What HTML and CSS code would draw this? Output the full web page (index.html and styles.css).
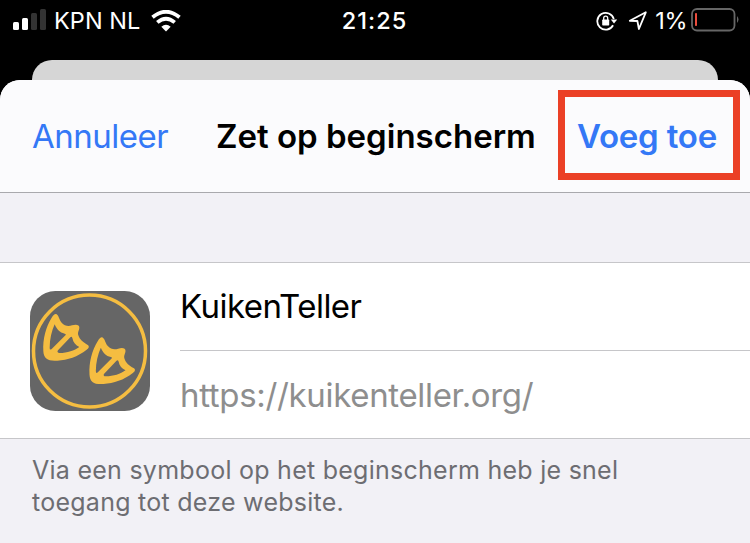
FILE: index.html
```html
<!DOCTYPE html>
<html lang="nl">
<head>
<meta charset="utf-8">
<title>Zet op beginscherm</title>
<link rel="stylesheet" href="styles.css">
</head>
<body>
<header class="status">
  <div class="status-left">
    <svg class="signal" width="33" height="22" viewBox="0 0 33 22">
      <rect x="0" y="13" width="6" height="8" rx="1.5" fill="#fff"/>
      <rect x="9" y="9" width="6" height="12" rx="1.5" fill="#fff"/>
      <rect x="18" y="4" width="6" height="17" rx="1.5" fill="#333"/>
      <rect x="27" y="0" width="6" height="21" rx="1.5" fill="#333"/>
    </svg>
    <span class="carrier">KPN NL</span>
    <svg class="wifi" width="30" height="22" viewBox="0 0 30 22">
      <g fill="none" stroke="#fff" stroke-width="3.8">
        <path d="M1.5 7.3 Q15 -3.8 28.5 7.3"/>
        <path d="M6.3 12.4 Q15 5 23.7 12.4"/>
      </g>
      <path d="M10.3 16.7 Q15 13 19.7 16.7 L15 21.5Z" fill="#fff"/>
    </svg>
  </div>
  <span class="time">21:25</span>
  <div class="status-right">
    <svg class="rotation" width="22" height="20" viewBox="0 0 22 20">
      <path d="M17.1 14.3 A8.4 8.4 0 1 1 17.8 8" fill="none" stroke="#fff" stroke-width="1.8"/>
      <path d="M14.8 8.4 H21.2 L18 12.5Z" fill="#fff"/>
      <rect x="6.2" y="8.6" width="7" height="5.8" rx=".7" fill="#fff"/>
      <path d="M7.7 9 V7.2 A2 2 0 0 1 11.7 7.2 V9" fill="none" stroke="#fff" stroke-width="1.3"/>
    </svg>
    <svg class="location" width="20" height="20" viewBox="0 0 20 20">
      <path d="M1.8 9.8 L17.8 1.3 L10.9 18 L9.4 10Z" fill="none" stroke="#fff" stroke-width="1.8" stroke-linejoin="round"/>
    </svg>
    <span class="percent">1%</span>
    <svg class="battery" width="48" height="24" viewBox="0 0 48 24">
      <rect x="1" y="1" width="42.5" height="21.5" rx="5" fill="none" stroke="#666" stroke-width="1.8"/>
      <rect x="4" y="5" width="2" height="13" rx=".8" fill="#eb4d3d"/>
      <path d="M46 8 Q49 11.5 46 15Z" fill="#666"/>
    </svg>
  </div>
</header>
<div class="back-card"></div>
<main class="sheet">
  <nav class="toolbar">
    <span class="cancel">Annuleer</span>
    <h1 class="title">Zet op beginscherm</h1>
    <div class="highlight"><span class="add">Voeg toe</span></div>
  </nav>
  <section class="bookmark">
    <svg class="app-icon" width="120" height="120" viewBox="30 33 360 360">
      <defs>
        <path id="foot" fill-rule="evenodd" d="M110 103 C117 108 117 119 125 128 C134 138 145 140 156 136 C168 132 179 134 178 143 C177 153 172 157 175 166 C179 179 190 187 202 194 C209 198 207 204 200 209 C173 230 143 240 112 242 C85 244 71 237 70 214 C68 175 78 141 95 113 C101 104 105 100 110 103Z M104 133 C95 153 89 177 89 203 Q89 212 95 207 L137 165 Q139 162 134 161 C119 158 111 149 104 133Z M151 172 L114 211 Q109 218 119 219 C142 219 163 212 178 201 C167 196 160 188 157 174 Q155 168 151 172Z"/>
      </defs>
      <rect x="30" y="33" width="360" height="360" rx="76" fill="#666"/>
      <circle cx="208.5" cy="213" r="168" fill="none" stroke="#f5bd41" stroke-width="10.5"/>
      <g fill="#f5bd41"><use href="#foot"/><use href="#foot" x="138.5" y="70"/></g>
    </svg>
    <div class="fields">
      <div class="field name"><span>KuikenTeller</span></div>
      <div class="field url"><span>https://kuikenteller.org/</span></div>
    </div>
  </section>
  <p class="note">Via een symbool op het beginscherm heb je snel<br>toegang tot deze website.</p>
</main>
</body>
</html>
```
FILE: styles.css
```css
* { box-sizing: border-box; }
body {
  margin: 0;
  width: 750px;
  height: 543px;
  overflow: hidden;
  background: #000;
  font-family: Inter, "Liberation Sans", sans-serif;
  white-space: nowrap;
}
svg { display: block; flex: none; }
.status {
  display: grid;
  grid-template-columns: 1fr auto 1fr;
  height: 60px;
  padding: 0 11px 0 13px;
  color: #fff;
  font-size: 23.5px;
  line-height: 42px;
}
.status-left, .status-right { display: flex; height: 41px; align-items: center; }
.status-right { justify-content: flex-end; }
.signal { margin: 0 8px 2px 0; }
.carrier { width: 97px; letter-spacing: .05px; }
.time { margin: 0 2px 0 -1px; font-weight: 500; letter-spacing: 1px; }
.rotation { margin-right: 10px; }
.location { margin-right: 7px; }
.percent { margin-right: 4px; letter-spacing: -.5px; }
.battery { margin-bottom: 1px; }
.back-card {
  height: 20px;
  margin: 0 32px;
  border-radius: 20px 20px 0 0;
  background: #d6d6d6;
}
.sheet {
  height: 463px;
  overflow: hidden;
  border-radius: 20px 20px 0 0;
  background: #f2f1f6;
}
.toolbar {
  display: flex;
  height: 113px;
  padding: 10px 10px 0 32px;
  border-bottom: 1px solid #a9a9ad;
  background: #fbfbfd;
  font-size: 33px;
  line-height: 40px;
}
.cancel { width: 184px; padding-top: 26px; color: #3478f6; letter-spacing: -.5px; }
.title { width: 342px; margin: 0; padding-top: 26px; font-size: 33px; font-weight: 600; letter-spacing: 0; }
.highlight {
  width: 182px;
  height: 90px;
  padding: 19px 0 0 12px;
  border: 7px solid #eb4026;
  color: #3478f6;
  font-weight: 600;
  letter-spacing: -.2px;
}
.bookmark {
  display: flex;
  gap: 30px;
  height: 177px;
  margin-top: 69px;
  padding-left: 30px;
  border: solid #c6c6c9;
  border-width: 1px 0;
  background: #fff;
}
.app-icon { margin-top: 28px; }
.fields { flex: 1; font-size: 33px; }
.field { height: 88px; line-height: 88px; }
.name { line-height: 86px; border-bottom: 1px solid #c6c6c9; letter-spacing: -.55px; }
.url { color: #8e8e8e; letter-spacing: -.33px; }
.note {
  margin: 15px 0 0 32px;
  color: #6d6d72;
  font-size: 25px;
  line-height: 32px;
  letter-spacing: .26px;
}
```
